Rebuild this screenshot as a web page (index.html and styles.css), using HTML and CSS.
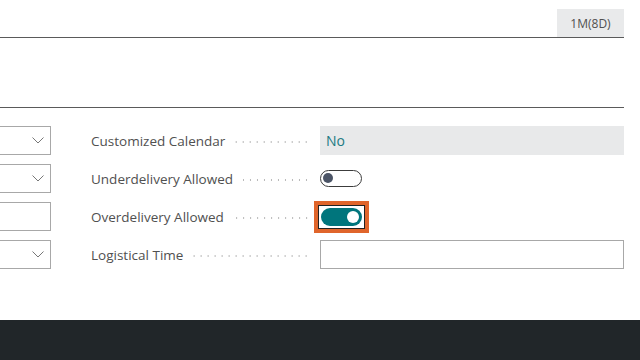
FILE: index.html
```html
<!DOCTYPE html>
<html lang="en">
<head>
  <meta charset="UTF-8" />
  <title>Item Card</title>
  <link rel="stylesheet" href="styles.css">
</head>
<body>

<div class="page">
  <div class="top-bar">
    <div class="period-box">1M(8D)</div>
  </div>
  <div class="section-gap"></div>

  <div class="form">
    <div class="row">
      <div class="left-input"><svg class="chev" width="12" height="7" viewBox="0 0 12 7"><path d="M0.5 0.5 L6 6 L11.5 0.5" fill="none" stroke="#777" stroke-width="1"/></svg></div>
      <div class="label"><span>Customized Calendar</span><i class="dots"></i></div>
      <div class="field readonly">No</div>
    </div>
    <div class="row">
      <div class="left-input"><svg class="chev" width="12" height="7" viewBox="0 0 12 7"><path d="M0.5 0.5 L6 6 L11.5 0.5" fill="none" stroke="#777" stroke-width="1"/></svg></div>
      <div class="label"><span>Underdelivery Allowed</span><i class="dots"></i></div>
      <div class="field plain">
        <div class="toggle off"><span class="knob"></span></div>
      </div>
    </div>
    <div class="row">
      <div class="left-input"></div>
      <div class="label"><span>Overdelivery Allowed</span><i class="dots"></i></div>
      <div class="field plain">
        <div class="focus-ring">
          <div class="focus-inner">
            <div class="toggle on"><span class="knob"></span></div>
          </div>
        </div>
      </div>
    </div>
    <div class="row">
      <div class="left-input"><svg class="chev" width="12" height="7" viewBox="0 0 12 7"><path d="M0.5 0.5 L6 6 L11.5 0.5" fill="none" stroke="#777" stroke-width="1"/></svg></div>
      <div class="label"><span>Logistical Time</span><i class="dots"></i></div>
      <div class="field input"></div>
    </div>
  </div>

  <footer class="dark-band"></footer>
</div>

</body>
</html>
```

FILE: styles.css
```css
* {
  margin: 0;
  padding: 0;
  box-sizing: border-box;
}

body {
  font-family: 'Open Sans', 'Noto Sans', sans-serif;
  background: #fff;
  color: #505050;
  width: 640px;
  height: 360px;
  overflow: hidden;
}

.page {
  height: 360px;
  display: flex;
  flex-direction: column;
}

.top-bar {
  height: 38px;
  margin-right: 16px;
  display: flex;
  justify-content: flex-end;
  align-items: flex-end;
  border-bottom: 1px solid #5a5a5a;
}

.period-box {
  width: 67px;
  height: 28px;
  background: #e9eaeb;
  font-size: 12px;
  color: #505050;
  display: flex;
  align-items: center;
  justify-content: center;
}

.section-gap {
  height: 70px;
  margin-right: 16px;
  border-bottom: 1px solid #5a5a5a;
}

.form {
  padding-top: 18px;
  padding-right: 16px;
  display: flex;
  flex-direction: column;
  gap: 9px;
}

.row {
  display: flex;
  align-items: center;
  height: 29px;
}

.left-input {
  width: 61px;
  height: 29px;
  margin-left: -10px;
  margin-right: 40px;
  border: 1px solid #a8a8a8;
  display: flex;
  align-items: center;
  justify-content: flex-end;
  padding-right: 6px;
}

.label {
  width: 219px;
  display: flex;
  align-items: center;
  font-size: 13.5px;
  color: #505050;
  white-space: nowrap;
}

.dots {
  flex: 1;
  height: 4px;
  margin-left: 10px;
  margin-top: 3px;
  background-image: radial-gradient(circle, #b8b8b8 0.7px, transparent 1px);
  background-size: 7px 4px;
  background-position: right center;
}

.field {
  flex: 1;
  height: 29px;
  margin-left: 10px;
  display: flex;
  align-items: center;
  font-size: 14px;
}

.field.readonly {
  background: #e8e9ea;
  color: #1d7a82;
  padding-left: 6px;
}

.field.input {
  border: 1px solid #a8a8a8;
}

.toggle {
  width: 42px;
  height: 17px;
  border-radius: 9px;
  position: relative;
}

.toggle.off {
  border: 1.5px solid #3c3c3c;
  background: #fff;
}

.toggle.off .knob {
  position: absolute;
  left: 2px;
  top: 2px;
  width: 10px;
  height: 10px;
  border-radius: 50%;
  background: #4b5466;
}

.toggle.on {
  background: #00757c;
  width: 41px;
  height: 18px;
}

.toggle.on .knob {
  position: absolute;
  right: 3px;
  top: 3px;
  width: 12px;
  height: 12px;
  border-radius: 50%;
  background: #fff;
}

.focus-ring {
  margin-left: -6px;
  border: 4px solid #e0652b;
  padding: 0;
}

.focus-inner {
  border: 1px solid #222;
  padding: 2px 2px;
  background: #fff;
}

.dark-band {
  margin-top: auto;
  height: 40px;
  background: #212629;
}
```
